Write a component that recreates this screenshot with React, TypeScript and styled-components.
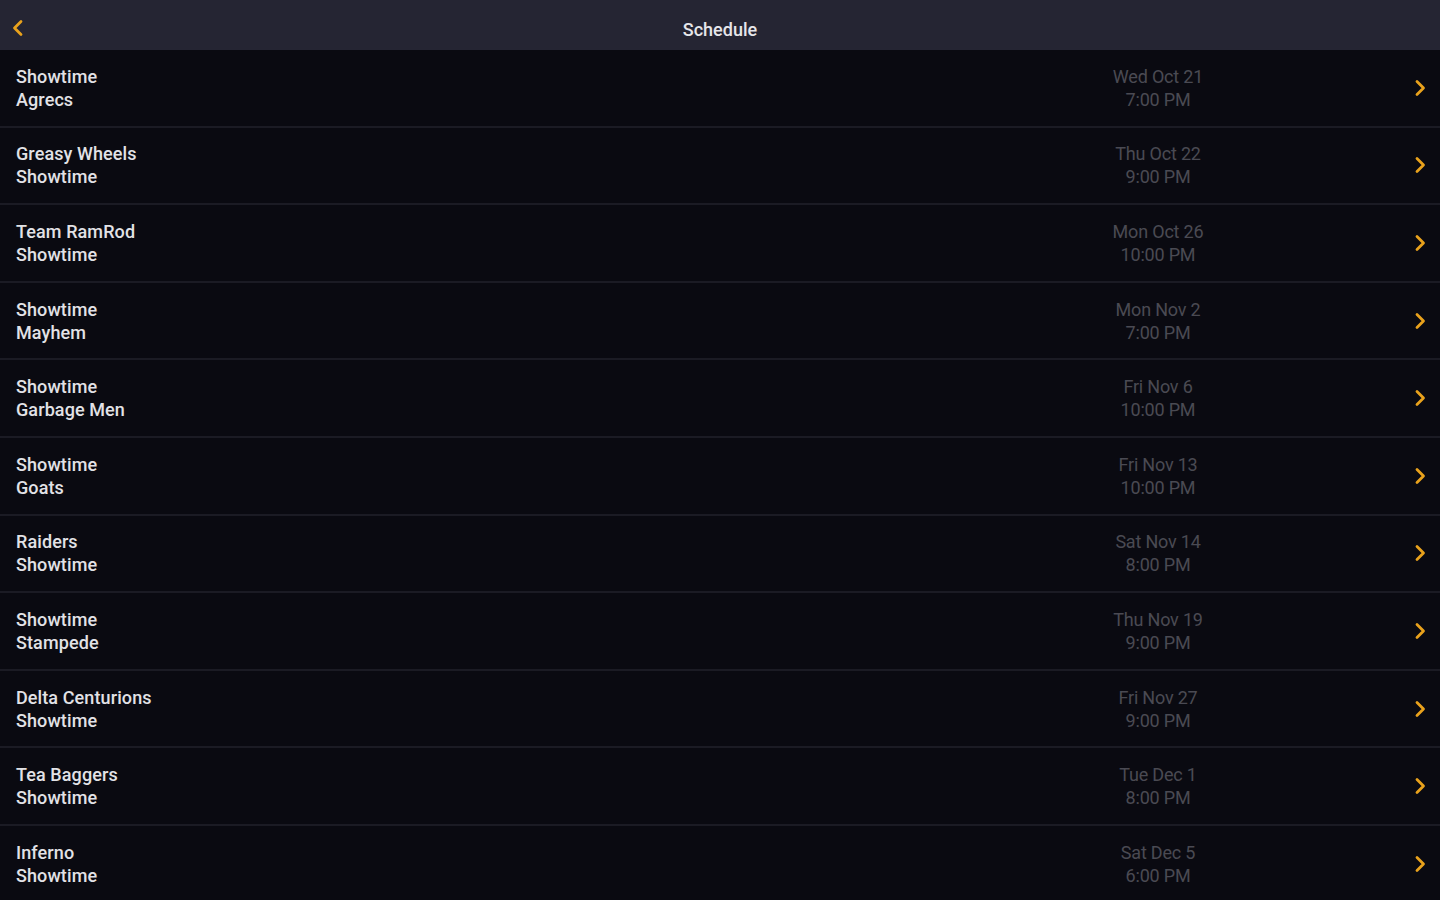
import React from "react";
import styled, { createGlobalStyle } from "styled-components";

const Global = createGlobalStyle`
  html, body { margin: 0; padding: 0; background: #0a0a11; }
  body { font-family: Roboto, "Noto Sans", "Liberation Sans", sans-serif; overflow: hidden; }
  * { box-sizing: border-box; }
`;

const Page = styled.div`
  width: 1440px;
  height: 900px;
  background: #0a0a11;
  display: flex;
  flex-direction: column;
  overflow: hidden;
`;

const Header = styled.header`
  height: 50px;
  flex: none;
  background: #252533;
  display: grid;
  grid-template-columns: 50px 1fr 50px;
  align-items: center;
`;

const BackButton = styled.button`
  background: none;
  border: none;
  padding: 6px 0 0 12px;
  display: flex;
  align-items: center;
  cursor: pointer;
`;

const Title = styled.h1`
  margin: 0;
  padding-top: 8px;
  text-align: center;
  color: #e6e6ea;
  font-size: 18px;
  font-weight: 500;
`;

const List = styled.div`
  display: flex;
  flex-direction: column;
`;

const Row = styled.div`
  height: 77.6px;
  flex: none;
  display: flex;
  align-items: center;
  padding: 0 14px 0 16px;
  border-bottom: 2px solid #1b1b24;
`;

const Teams = styled.div`
  flex: 1;
  display: flex;
  flex-direction: column;
  color: #e2e2e6;
  font-size: 18px;
  font-weight: 500;
  line-height: 23px;
  letter-spacing: 0.1px;
`;

const When = styled.div`
  width: 200px;
  margin-right: 156px;
  display: flex;
  flex-direction: column;
  align-items: center;
  color: #4a4a53;
  font-size: 18px;
  line-height: 23px;
  letter-spacing: -0.2px;
`;

const Chevron = ({ dir = "right" }: { dir?: "left" | "right" }) => (
  <svg width="12" height="18" viewBox="0 0 12 18" fill="none">
    <path
      d={dir === "right" ? "M3 2.5 L9.5 9 L3 15.5" : "M9 2.5 L2.5 9 L9 15.5"}
      stroke="#e9a21c"
      strokeWidth="2.8"
      strokeLinecap="round"
      strokeLinejoin="round"
    />
  </svg>
);

const games = [
  ["Showtime", "Agrecs", "Wed Oct 21", "7:00 PM"],
  ["Greasy Wheels", "Showtime", "Thu Oct 22", "9:00 PM"],
  ["Team RamRod", "Showtime", "Mon Oct 26", "10:00 PM"],
  ["Showtime", "Mayhem", "Mon Nov 2", "7:00 PM"],
  ["Showtime", "Garbage Men", "Fri Nov 6", "10:00 PM"],
  ["Showtime", "Goats", "Fri Nov 13", "10:00 PM"],
  ["Raiders", "Showtime", "Sat Nov 14", "8:00 PM"],
  ["Showtime", "Stampede", "Thu Nov 19", "9:00 PM"],
  ["Delta Centurions", "Showtime", "Fri Nov 27", "9:00 PM"],
  ["Tea Baggers", "Showtime", "Tue Dec 1", "8:00 PM"],
  ["Inferno", "Showtime", "Sat Dec 5", "6:00 PM"],
];

export default function App() {
  return (
    <Page>
      <Global />
      <Header>
        <BackButton aria-label="Back">
          <Chevron dir="left" />
        </BackButton>
        <Title>Schedule</Title>
        <span />
      </Header>
      <List>
        {games.map(([a, b, d, t], i) => (
          <Row key={i}>
            <Teams>
              <span>{a}</span>
              <span>{b}</span>
            </Teams>
            <When>
              <span>{d}</span>
              <span>{t}</span>
            </When>
            <Chevron />
          </Row>
        ))}
      </List>
    </Page>
  );
}
